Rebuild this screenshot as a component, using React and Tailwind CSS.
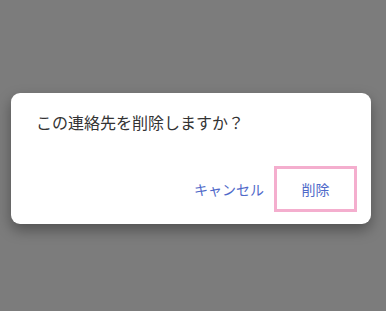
import React from "react";

export default function App() {
  return (
    <div
      className="w-[386px] h-[311px] bg-[#7c7c7c] overflow-hidden pt-[93px] pl-[11px]"
      style={{ fontFamily: '"Noto Sans CJK JP", "Noto Sans", sans-serif' }}
    >
      {/* Confirm dialog */}
      <div className="w-[360px] h-[131px] bg-white rounded-[9px] shadow-[0_6px_14px_rgba(0,0,0,0.35)] flex flex-col">
        <p className="pl-[25px] pt-[17px] text-[16px] leading-[24px] text-[#333333]">
          この連絡先を削除しますか？
        </p>
        <div className="mt-auto mb-[12px] mr-[14px] flex items-center justify-end">
          <button className="text-[14px] text-[#4f69c9] pr-[10px]">キャンセル</button>
          <button className="w-[83px] h-[46px] border-[3px] border-[#f4aece] text-[14px] text-[#4f69c9] flex items-center justify-center">
            削除
          </button>
        </div>
      </div>
    </div>
  );
}
